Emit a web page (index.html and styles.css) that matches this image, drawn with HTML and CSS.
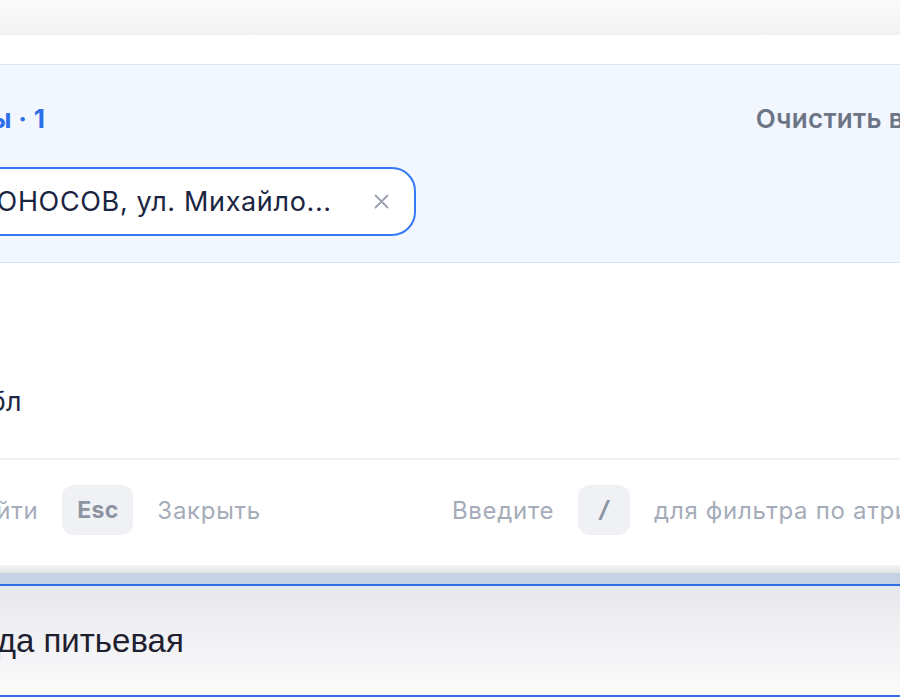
FILE: index.html
```html
<!DOCTYPE html>
<html lang="ru">
<head>
    <meta charset="UTF-8">
    <meta name="viewport" content="width=device-width, initial-scale=1.0">
    <title>Фильтры</title>
    <link rel="stylesheet" href="styles.css">
</head>
<body>
    <div class="topbar"></div>

    <div class="sheet">
        <!-- Selected filters -->
        <section class="filters">
            <div class="filters-head">
                <span class="filters-title">Выбранные фильтры · 1</span>
                <button class="filters-clear">Очистить все</button>
            </div>
            <div class="chips">
                <span class="chip">
                    <span class="chip-text">г. ЛОМОНОСОВ, ул. Михайло...</span>
                    <svg class="chip-close" width="15" height="15" viewBox="0 0 15 15">
                        <path d="M1.5 1.5L13.5 13.5M13.5 1.5L1.5 13.5" stroke="#9ba2ae" stroke-width="1.8" stroke-linecap="round"/>
                    </svg>
                </span>
            </div>
        </section>

        <!-- Results -->
        <div class="results">
            <div class="result-item">Строительные материалы, гипсобл</div>
        </div>

        <!-- Hints -->
        <div class="hints">
            <span class="hint hint-first">Перейти</span>
            <kbd class="key">Esc</kbd>
            <span class="hint">Закрыть</span>
            <span class="hint hint-right">Введите</span>
            <kbd class="key key-slash">/</kbd>
            <span class="hint">для фильтра по атрибутам</span>
        </div>
    </div>

    <div class="backdrop">
        <div class="backdrop-shade"></div>
        <div class="backdrop-band"></div>
        <div class="field">
            <span class="field-text">Вода питьевая</span>
        </div>
    </div>
</body>
</html>
```

FILE: styles.css
```css
html, body {
    margin: 0;
    padding: 0;
}

body {
    background: #fff;
    font-family: Inter, "Noto Sans", sans-serif;
    overflow: hidden;
    width: 900px;
    height: 700px;
}

.topbar {
    height: 35px;
    background: linear-gradient(#fbfbfb, #f2f2f3);
}

.sheet {
    background: #fff;
    padding-top: 29px;
}

.filters {
    background: #f2f6fe;
    border-top: 1px solid #d9e4f7;
    border-bottom: 1px solid #d9e4f7;
    height: 197px;
}

.filters-head {
    display: flex;
    align-items: center;
    height: 34px;
    padding-top: 36px;
    white-space: nowrap;
}

.filters-title {
    margin-left: -272px;
    font-size: 26px;
    font-weight: 700;
    letter-spacing: 0.3px;
    color: #2e6fec;
}

.filters-clear {
    margin-left: auto;
    margin-right: -35px;
    flex-shrink: 0;
    border: none;
    background: none;
    padding: 0;
    font-family: inherit;
    font-size: 26px;
    font-weight: 600;
    letter-spacing: 0.3px;
    color: #6c7586;
}

.chips {
    display: flex;
    padding-top: 32px;
}

.chip {
    display: flex;
    align-items: center;
    flex-shrink: 0;
    height: 65px;
    margin-left: -124px;
    padding: 0 25px 0 24px;
    border: 2px solid #3579f4;
    border-radius: 24px;
    background: #fff;
    white-space: nowrap;
}

.chip-text {
    font-size: 27px;
    letter-spacing: 0.65px;
    color: #1b2541;
}

.chip-close {
    margin-left: 42px;
}

.results {
    height: 195px;
    display: flex;
    align-items: flex-end;
    border-bottom: 2px solid #eff0f2;
    white-space: nowrap;
}

.result-item {
    margin-left: -456px;
    padding-bottom: 40px;
    font-size: 27px;
    letter-spacing: 0.3px;
    color: #1d2944;
}

.hints {
    display: flex;
    align-items: center;
    gap: 24px;
    height: 100px;
    padding-bottom: 5px;
    white-space: nowrap;
    font-size: 24px;
    letter-spacing: 0.7px;
    color: #a5acb9;
}

.hint-first {
    margin-left: -67px;
}

.hint-right {
    margin-left: 167px;
}

.key {
    display: flex;
    align-items: center;
    justify-content: center;
    height: 50px;
    min-width: 71px;
    box-sizing: border-box;
    border-radius: 12px;
    background: #f0f1f4;
    font-family: inherit;
    font-size: 23px;
    font-weight: 700;
    letter-spacing: 0.3px;
    color: #8d94a1;
}

.key-slash {
    min-width: 52px;
    font-style: italic;
}

.backdrop-shade {
    height: 8px;
    background: linear-gradient(#f4f4f5, #e2e3e6);
}

.backdrop-band {
    height: 11px;
    background: #c6d1e3;
}

.field {
    height: 109px;
    display: flex;
    align-items: center;
    border-top: 2px solid #2f6fe8;
    border-bottom: 2px solid #2f6fe8;
    background: linear-gradient(#e7e8ec, #fbfbfc);
    white-space: nowrap;
}

.field-text {
    margin-left: -43px;
    font-family: "Liberation Sans", Arial, sans-serif;
    font-size: 33px;
    color: #1e2030;
}
```
